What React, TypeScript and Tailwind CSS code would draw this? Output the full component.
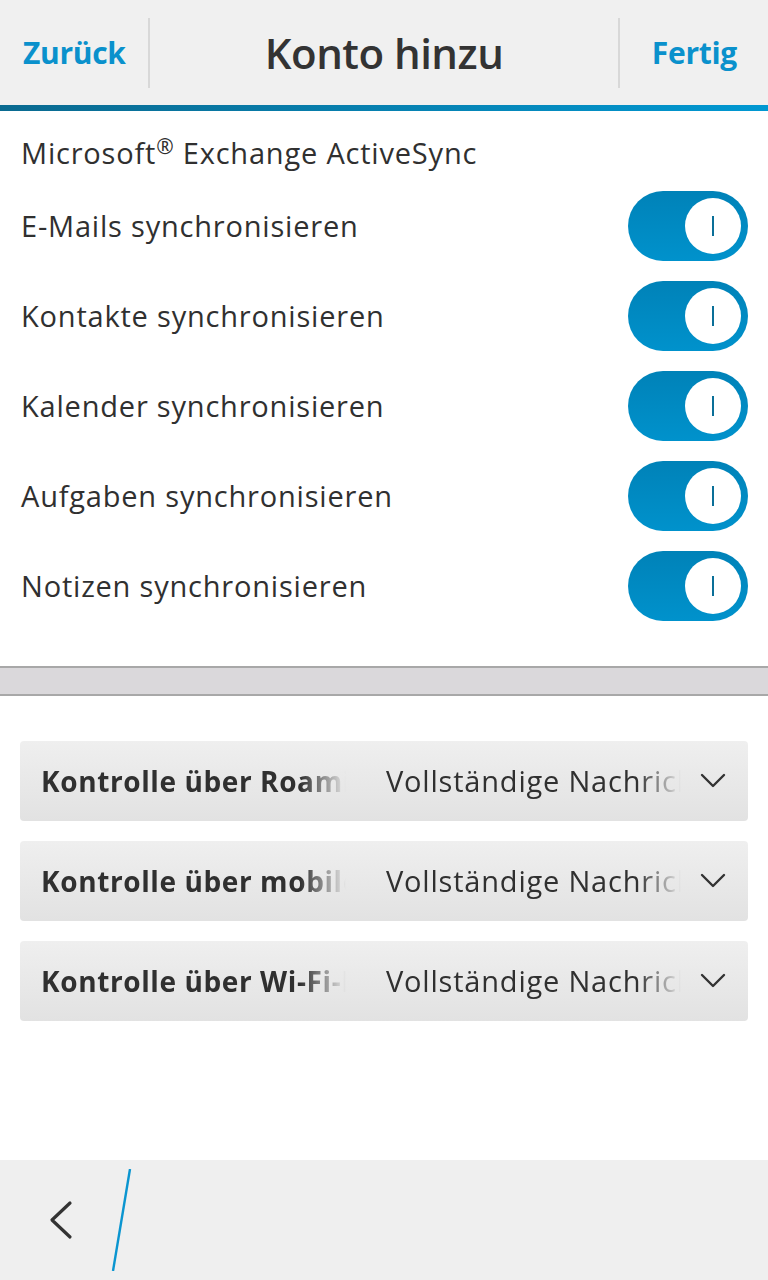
const rows = [
  "E-Mails synchronisieren",
  "Kontakte synchronisieren",
  "Kalender synchronisieren",
  "Aufgaben synchronisieren",
  "Notizen synchronisieren",
];

const drops = [
  "Kontrolle über Roaming",
  "Kontrolle über mobile Daten",
  "Kontrolle über Wi-Fi-Netzwerke",
];

function Toggle() {
  return (
    <div className="relative h-[70px] w-[120px] rounded-full bg-gradient-to-b from-[#0082b8] to-[#0092cc]">
      <div className="absolute right-[7px] top-[7px] flex h-[56px] w-[56px] items-center justify-center rounded-full bg-white">
        <div className="h-[20px] w-[2px] bg-[#0a6f98]" />
      </div>
    </div>
  );
}

function Chevron() {
  return (
    <svg width="26" height="16" viewBox="0 0 26 16" fill="none">
      <path d="M2 2l11 11L24 2" stroke="#333" strokeWidth="2.4" strokeLinecap="round" strokeLinejoin="round" />
    </svg>
  );
}

export default function App() {
  return (
    <div className="flex h-[1280px] w-[768px] flex-col bg-white font-['Open_Sans','Noto_Sans',sans-serif] text-[#303030]">
      <header className="flex h-[105px] items-center bg-[#f0f0f0]">
        <div className="flex h-[70px] w-[150px] items-center border-r-2 border-[#d8d8d8] pl-[23px] text-[30px] font-bold tracking-[-0.3px] text-[#0a91cc]">
          Zurück
        </div>
        <div className="flex-1 text-center text-[42px] font-semibold tracking-[-0.5px] text-[#333]">Konto hinzu</div>
        <div className="flex h-[70px] w-[150px] items-center justify-end border-l-2 border-[#d8d8d8] pr-[31px] text-[30px] font-bold tracking-[-0.3px] text-[#0a91cc]">
          Fertig
        </div>
      </header>
      <div className="h-[6px] bg-gradient-to-r from-[#0a6a90] to-[#0098d2]" />

      <div className="pl-[21px] pt-[23px] text-[29px] leading-[38px] tracking-[0.8px]">
        Microsoft<sup className="text-[21px]">®</sup> Exchange ActiveSync
      </div>

      <div className="mt-[9px] flex flex-col pl-[21px] pr-[20px]">
        {rows.map((r) => (
          <div key={r} className="flex h-[90px] items-center justify-between">
            <span className="text-[29px] tracking-[0.8px]">{r}</span>
            <Toggle />
          </div>
        ))}
      </div>

      <div className="mt-[35px] h-[30px] border-y-2 border-[#a8a8a8] bg-[#dad8db]" />

      <div className="flex flex-col gap-[20px] px-[20px] pt-[45px]">
        {drops.map((d) => (
          <div
            key={d}
            className="flex h-[80px] items-center rounded-[4px] bg-gradient-to-b from-[#efefef] to-[#e2e2e2] pl-[21px] pr-[22px]"
          >
            <div className="w-[305px] overflow-hidden whitespace-nowrap text-[28px] font-bold tracking-[0.6px] [mask-image:linear-gradient(to_right,black_85%,transparent)]">
              {d}
            </div>
            <div className="ml-[40px] w-[295px] overflow-hidden whitespace-nowrap text-[29px] tracking-[0.8px] [mask-image:linear-gradient(to_right,black_85%,transparent)]">
              Vollständige Nachrichten
            </div>
            <div className="ml-auto">
              <Chevron />
            </div>
          </div>
        ))}
      </div>

      <div className="flex-1" />

      <footer className="flex h-[120px] items-center bg-[#efefef]">
        <div className="pl-[48px]">
          <svg width="26" height="40" viewBox="0 0 26 40" fill="none">
            <path d="M22 3L4 20l18 17" stroke="#333" strokeWidth="3.2" strokeLinecap="round" strokeLinejoin="round" />
          </svg>
        </div>
        <svg width="24" height="102" viewBox="0 0 24 102" className="ml-[36px]">
          <path d="M20 0L3 102" stroke="#0a95d0" strokeWidth="2.4" />
        </svg>
      </footer>
    </div>
  );
}
